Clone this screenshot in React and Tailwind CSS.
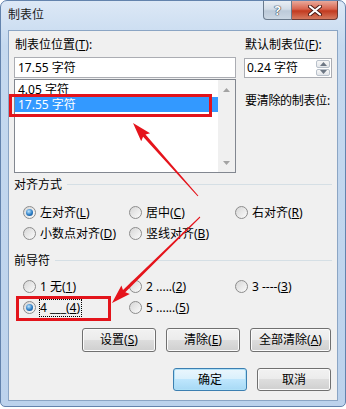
import React from "react";

const arrow = (x1, y1, x2, y2, head = 17, hw = 6, w0 = 0.5, w1 = 1.6) => {
  const dx = x2 - x1;
  const dy = y2 - y1;
  const len = Math.hypot(dx, dy);
  const ux = dx / len;
  const uy = dy / len;
  const nx = -uy;
  const ny = ux;
  const bx = x2 - ux * head;
  const by = y2 - uy * head;
  const pts = [
    [x1 + nx * w0, y1 + ny * w0],
    [bx + nx * w1, by + ny * w1],
    [bx - ux * 2 + nx * hw, by - uy * 2 + ny * hw],
    [x2, y2],
    [bx - ux * 2 - nx * hw, by - uy * 2 - ny * hw],
    [bx - nx * w1, by - ny * w1],
    [x1 - nx * w0, y1 - ny * w0],
  ];
  return pts.map((p) => p.map((v) => v.toFixed(1)).join(",")).join(" ");
};

const Radio = ({ checked, focus, children }) => (
  <div className="flex items-center h-[21px]">
    <span className="w-[13px] h-[13px] shrink-0 rounded-full border border-[#8c8c8c] bg-[linear-gradient(135deg,#d6d6d6,#fbfbfb)] flex items-center justify-center">
      {checked && (
        <span className="w-[7px] h-[7px] rounded-full bg-[radial-gradient(circle_at_40%_35%,#bfe6ff,#2a7cc4_55%,#0c3f78)]" />
      )}
    </span>
    {focus ? (
      <span className="ml-[3px] border border-dotted border-black pr-[1px] leading-[16px] whitespace-nowrap">
        {children}
      </span>
    ) : (
      <span className="ml-[4px] whitespace-nowrap">{children}</span>
    )}
  </div>
);

const Group = ({ title }) => (
  <div className="flex items-center h-[16px]">
    <span>{title}</span>
    <span className="flex-1 ml-[5px] h-[2px] border-t border-[#d5dfe5] border-b-white" />
  </div>
);

const Btn = ({ w, h, primary, children }) => (
  <div
    className={`${w} ${h} rounded-[3px] border flex items-center justify-center whitespace-nowrap ${
      primary
        ? "border-[#3c7fb1] shadow-[inset_0_0_0_1px_#aee0f7] bg-[linear-gradient(#eaf6fd,#d9f0fc_50%,#bee6fd_50%,#a7d9f5)]"
        : "border-[#707070] shadow-[inset_0_0_0_1px_#fbfbfb] bg-[linear-gradient(#f2f2f2,#ebebeb_50%,#dddddd_50%,#cfcfcf)]"
    }`}
  >
    {children}
  </div>
);

const Tri = ({ up, color = "#a3a3a3" }) => (
  <svg width="7" height="4" viewBox="0 0 7 4">
    <path d={up ? "M0 4 L3.5 0 L7 4 Z" : "M0 0 L7 0 L3.5 4 Z"} fill={color} />
  </svg>
);

export default function App() {
  return (
    <div className="relative w-[346px] h-[409px] bg-white text-[12px] leading-[16px] text-black font-['Noto_Sans','Noto_Sans_CJK_SC',sans-serif]">
      <div className="w-[346px] h-[407px] rounded-t-[7px] rounded-b-[5px] border border-[#6383ad] bg-[linear-gradient(to_bottom,#dce8f6,#c5d9ef_45px,#bcd2ec)] px-[7px] flex flex-col">
        {/* title bar */}
        <div className="h-[29px] shrink-0 flex justify-between items-start">
          <div className="pt-[6px] text-[#1a1a1a]">制表位</div>
          <div className="flex">
            <div className="w-[29px] h-[19px] rounded-bl-[4px] border border-t-0 border-[#6a7a8c] bg-[linear-gradient(#e9eef4,#d2dce7_45%,#bccad9_55%,#cbd7e4)] flex items-center justify-center">
              <span className="text-white font-bold text-[13px] leading-none [text-shadow:0_0_1px_#2d3a4a,0_0_1px_#2d3a4a,0_0_1px_#2d3a4a]">
                ?
              </span>
            </div>
            <div className="w-[46px] h-[19px] rounded-br-[4px] border border-t-0 border-l-0 border-[#6b3a34] bg-[linear-gradient(#e9a99b,#d8644e_45%,#c23a1f_55%,#d57a5f)] flex items-center justify-center">
              <svg width="14" height="11" viewBox="0 0 14 11">
                <path d="M2 1.5 L12 9.5 M12 1.5 L2 9.5" stroke="#4a1a14" strokeWidth="4" strokeLinecap="round" />
                <path d="M2 1.5 L12 9.5 M12 1.5 L2 9.5" stroke="#ffffff" strokeWidth="2.2" strokeLinecap="round" />
              </svg>
            </div>
          </div>
        </div>

        {/* client area */}
        <div className="h-[371px] border border-[#8ba5c4] bg-[#f0f0f0] px-[5px] flex flex-col">
          <div className="flex gap-[8px] pt-[6px]">
            <div className="w-[222px] flex flex-col">
              <div className="pl-[1px]">
                制表位位置(<u>T</u>):
              </div>
              <div className="mt-[4px] h-[21px] border border-[#abadb3] bg-white pl-[3px] flex items-center">
                17.55 字符
              </div>
              <div className="mt-[1px] h-[94px] border border-[#828790] bg-white flex">
                <div className="flex-1 pt-[2px] leading-[15px]">
                  <div className="h-[15px] pl-[3px]">4.05 字符</div>
                  <div className="h-[15px] pl-[3px] bg-[#3399ff] text-white">17.55 字符</div>
                </div>
                <div className="w-[17px] bg-[#f0f0f0] flex flex-col justify-between items-center pt-[8px] pb-[7px]">
                  <Tri up />
                  <Tri />
                </div>
              </div>
            </div>
            <div className="flex-1 flex flex-col whitespace-nowrap">
              <div className="pl-[1px]">
                默认制表位(<u>F</u>):
              </div>
              <div className="mt-[5px] h-[20px] border border-[#abadb3] bg-white flex">
                <div className="flex-1 pl-[2px] flex items-center">0.24 字符</div>
                <div className="w-[14px] mr-[1px] py-[1px] flex flex-col gap-px">
                  <div className="flex-1 rounded-[2px] border border-[#b9c1cb] bg-[linear-gradient(#f7f7f7,#e3e6ea)] flex items-center justify-center">
                    <Tri up color="#6d7784" />
                  </div>
                  <div className="flex-1 rounded-[2px] border border-[#b9c1cb] bg-[linear-gradient(#f7f7f7,#e3e6ea)] flex items-center justify-center">
                    <Tri color="#6d7784" />
                  </div>
                </div>
              </div>
              <div className="mt-[15px] pl-[1px] tracking-[-0.3px]">要清除的制表位:</div>
            </div>
          </div>

          <div className="mt-[4px]">
            <Group title="对齐方式" />
          </div>
          <div className="mt-[9px] pl-[9px] grid grid-cols-[106px_106px_auto]">
            <Radio checked>
              左对齐(<u>L</u>)
            </Radio>
            <Radio>
              居中(<u>C</u>)
            </Radio>
            <Radio>
              右对齐(<u>R</u>)
            </Radio>
            <Radio>
              小数点对齐(<u>D</u>)
            </Radio>
            <Radio>
              竖线对齐(<u>B</u>)
            </Radio>
          </div>

          <div className="mt-[9px]">
            <Group title="前导符" />
          </div>
          <div className="mt-[7px] pl-[9px] grid grid-cols-[106px_106px_auto]">
            <Radio>
              1 无(<u>1</u>)
            </Radio>
            <Radio>
              2 .....(<u>2</u>)
            </Radio>
            <Radio>
              3 ----(<u>3</u>)
            </Radio>
            <Radio checked focus>
              4 ___(<u>4</u>)
            </Radio>
            <Radio>
              5 ......(<u>5</u>)
            </Radio>
          </div>

          <div className="mt-[10px] flex justify-end gap-[10px] pr-[1px]">
            <Btn w="w-[74px]" h="h-[24px]">
              设置(<u>S</u>)
            </Btn>
            <Btn w="w-[74px]" h="h-[24px]">
              清除(<u>E</u>)
            </Btn>
            <Btn w="w-[81px]" h="h-[24px]">
              全部清除(<u>A</u>)
            </Btn>
          </div>
          <div className="mt-[16px] flex justify-end gap-[10px] pr-[1px]">
            <Btn w="w-[74px]" h="h-[23px]" primary>
              确定
            </Btn>
            <Btn w="w-[74px]" h="h-[23px]">
              取消
            </Btn>
          </div>
        </div>
      </div>

      {/* annotations */}
      <div className="absolute left-[9px] top-[94px] w-[203px] h-[23px] border-[3px] border-[#e3141b]" />
      <div className="absolute left-[16px] top-[296px] w-[95px] h-[25px] border-[3px] border-[#e3141b]" />
      <svg className="absolute inset-0 pointer-events-none" width="346" height="409" viewBox="0 0 346 409">
        <polygon points={arrow(198, 196, 133, 123)} fill="#e5141c" />
        <polygon points={arrow(200, 217, 112, 303)} fill="#e5141c" />
      </svg>
    </div>
  );
}
